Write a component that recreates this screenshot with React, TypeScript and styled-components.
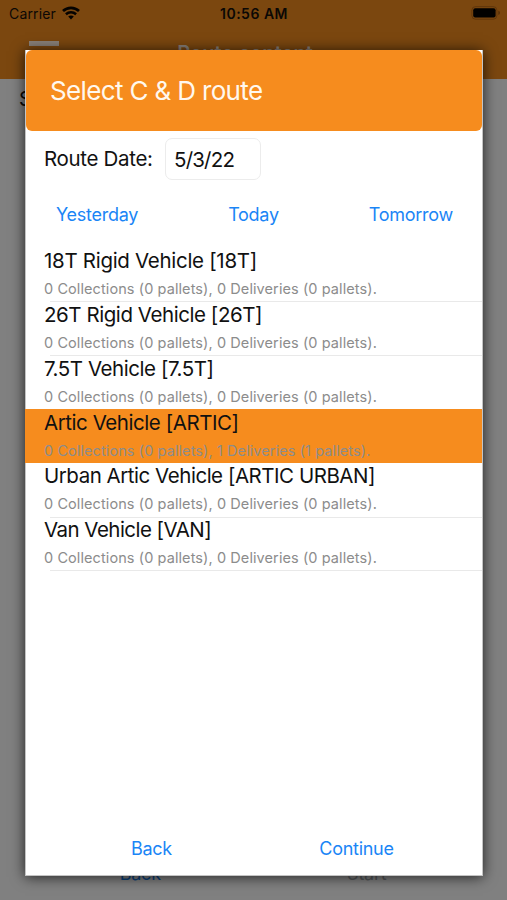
import React from "react";
import styled, { createGlobalStyle } from "styled-components";

const ORANGE = "#f68c1e";
const BLUE = "#1a85f6";

const GlobalStyle = createGlobalStyle`
  body { margin: 0; }
  * { box-sizing: border-box; }
`;

const Screen = styled.div`
  position: relative;
  width: 507px;
  height: 900px;
  overflow: hidden;
  display: flex;
  flex-direction: column;
  background: #808080;
  color: #0b0805;
  font-family: Inter, "Liberation Sans", sans-serif;
`;

const TopArea = styled.header`
  height: 79px;
  flex: none;
  background: #7b470f;
`;

const StatusBar = styled.div`
  display: grid;
  grid-template-columns: 1fr auto 1fr;
  align-items: center;
  height: 28px;
  padding: 0 6px 0 9px;
`;

const Carrier = styled.div`
  display: flex;
  align-items: center;
  gap: 6px;
  padding-bottom: 2px;
  font-size: 14px;
  letter-spacing: 0.15px;
`;

const Clock = styled.div`
  padding: 0 2px 2px 0;
  font-size: 14px;
  font-weight: 600;
  letter-spacing: 0.5px;
`;

const BatterySlot = styled.div`
  display: flex;
  justify-content: flex-end;
  padding-bottom: 2px;
`;

const NavBar = styled.div`
  position: relative;
  display: flex;
  justify-content: center;
  height: 51px;
  padding-top: 13px;
  padding-right: 17px;
`;

const MenuIcon = styled.span`
  position: absolute;
  left: 29px;
  top: 13px;
  width: 30px;
  height: 20px;
  border-top: 5px solid #898079;
  border-bottom: 5px solid #898079;
`;

const NavTitle = styled.div`
  font-size: 20px;
  line-height: 24px;
  font-weight: 600;
  letter-spacing: 0.05px;
  color: #898079;
`;

const PageBody = styled.main`
  flex: 1;
  padding: 8px 19px;
  font-size: 20px;
  line-height: 24px;
`;

const PageFooter = styled.footer`
  display: grid;
  grid-template-columns: 1fr 1fr;
  height: 37px;
  padding: 0 27px;
  font-size: 18px;
  line-height: 21px;
  letter-spacing: -0.25px;
`;

const PageAction = styled.span<{ $active?: boolean }>`
  text-align: center;
  color: ${(p) => (p.$active ? "#0b427c" : "#55585b")};
`;

const Modal = styled.section`
  position: absolute;
  left: 25px;
  top: 50px;
  width: 458px;
  height: 826px;
  display: flex;
  flex-direction: column;
  background: #fff;
  color: #111;
  border: solid #c4c4c4;
  border-width: 0 1px 1px;
  box-shadow: 0 1px 13px rgba(0, 0, 0, 0.75);
`;

const ModalHeader = styled.h1`
  display: flex;
  align-items: center;
  flex: none;
  height: 81px;
  margin: 0;
  padding: 0 24px 1px;
  border-radius: 6px;
  background: ${ORANGE};
  color: #fff8ee;
  font-size: 26px;
  font-weight: 400;
  letter-spacing: -0.65px;
`;

const DateRow = styled.div`
  display: flex;
  align-items: center;
  gap: 12px;
  height: 56px;
  padding: 0 0 0 18px;
  font-size: 20.5px;
`;

const DateLabel = styled.label`
  width: 109px;
  padding-bottom: 1px;
  letter-spacing: -0.32px;
  white-space: nowrap;
`;

const DateField = styled.div`
  display: flex;
  align-items: center;
  width: 96px;
  height: 42px;
  padding: 0 0 0 8px;
  border: 1px solid #ececec;
  border-radius: 7px;
  letter-spacing: -0.8px;
`;

const QuickDays = styled.div`
  display: flex;
  justify-content: space-between;
  align-items: center;
  height: 60.7px;
  flex: none;
  padding: 0 29px 5px 30px;
`;

const LinkButton = styled.button`
  border: 0;
  padding: 0;
  background: none;
  color: ${BLUE};
  font: 400 18px/22px Inter, "Liberation Sans", sans-serif;
  letter-spacing: -0.27px;
`;

const RouteList = styled.ul`
  flex: 1;
  margin: 0;
  padding: 0;
  list-style: none;
`;

const RouteItem = styled.li<{ $selected?: boolean }>`
  position: relative;
  z-index: ${(p) => (p.$selected ? 1 : 0)};
  height: 53.8px;
  margin-left: -1px;
  padding: 0.6px 0 0 19px;
  background: ${(p) => (p.$selected ? ORANGE : "transparent")};

  &::after {
    content: "";
    display: ${(p) => (p.$selected ? "none" : "block")};
    position: absolute;
    left: 25px;
    right: 0;
    bottom: -1px;
    height: 1px;
    background: #e9e9e9;
  }
`;

const RouteName = styled.div<{ $spacing: number }>`
  font-size: 20.5px;
  line-height: 26px;
  letter-spacing: ${(p) => p.$spacing}px;
  white-space: nowrap;
`;

const RouteSummary = styled.div`
  padding-top: 5px;
  font-size: 14.5px;
  line-height: 20px;
  letter-spacing: 0.09px;
  color: #8c8c8c;
  white-space: nowrap;
`;

const ModalFooter = styled.div`
  display: grid;
  grid-template-columns: 1fr 1fr;
  height: 37px;
  padding: 0 23px;
  align-items: start;
`;

const routes = [
  { name: "18T Rigid Vehicle [18T]", deliveries: 0, spacing: -0.3 },
  { name: "26T Rigid Vehicle [26T]", deliveries: 0, spacing: -0.44 },
  { name: "7.5T Vehicle [7.5T]", deliveries: 0, spacing: -0.44 },
  { name: "Artic Vehicle [ARTIC]", deliveries: 1, spacing: -0.44 },
  { name: "Urban Artic Vehicle [ARTIC URBAN]", deliveries: 0, spacing: -0.47 },
  { name: "Van Vehicle [VAN]", deliveries: 0, spacing: -0.54 },
];

const Wifi = () => (
  <svg width="18" height="14" viewBox="0 0 18 14" fill="none" stroke="#050301">
    <path d="M1 5.1C5.5.8 12.5.8 17 5.1" strokeWidth="2.7" />
    <path d="M3.9 8.2c2.9-2.6 7.3-2.6 10.2 0" strokeWidth="2.5" />
    <path d="M6.2 10.6c1.5-1.5 4.1-1.5 5.6 0L9 13.6z" fill="#050301" stroke="none" />
  </svg>
);

const Battery = () => (
  <svg width="30" height="14" viewBox="0 0 30 14">
    <rect x=".9" y=".6" width="25" height="12.6" rx="3.6" fill="none" stroke="#57300a" strokeOpacity=".7" />
    <rect x="2.2" y="2.2" width="22.4" height="9.4" rx="2" fill="#020100" />
    <path d="M27.3 4.8c2.2.6 2.2 3.6 0 4.2z" fill="#57300a" />
  </svg>
);

export default function App() {
  return (
    <Screen>
      <GlobalStyle />
      <TopArea>
        <StatusBar>
          <Carrier>
            Carrier
            <Wifi />
          </Carrier>
          <Clock>10:56 AM</Clock>
          <BatterySlot>
            <Battery />
          </BatterySlot>
        </StatusBar>
        <NavBar>
          <MenuIcon />
          <NavTitle>Route content</NavTitle>
        </NavBar>
      </TopArea>
      <PageBody>S</PageBody>
      <PageFooter>
        <PageAction $active>Back</PageAction>
        <PageAction>Start</PageAction>
      </PageFooter>
      <Modal>
        <ModalHeader>Select C &amp; D route</ModalHeader>
        <DateRow>
          <DateLabel>Route Date:</DateLabel>
          <DateField>5/3/22</DateField>
        </DateRow>
        <QuickDays>
          <LinkButton>Yesterday</LinkButton>
          <LinkButton>Today</LinkButton>
          <LinkButton>Tomorrow</LinkButton>
        </QuickDays>
        <RouteList>
          {routes.map((r) => (
            <RouteItem key={r.name} $selected={r.deliveries > 0}>
              <RouteName $spacing={r.spacing}>{r.name}</RouteName>
              <RouteSummary>
                {`0 Collections (0 pallets), ${r.deliveries} Deliveries (${r.deliveries} pallets).`}
              </RouteSummary>
            </RouteItem>
          ))}
        </RouteList>
        <ModalFooter>
          <LinkButton>Back</LinkButton>
          <LinkButton>Continue</LinkButton>
        </ModalFooter>
      </Modal>
    </Screen>
  );
}
